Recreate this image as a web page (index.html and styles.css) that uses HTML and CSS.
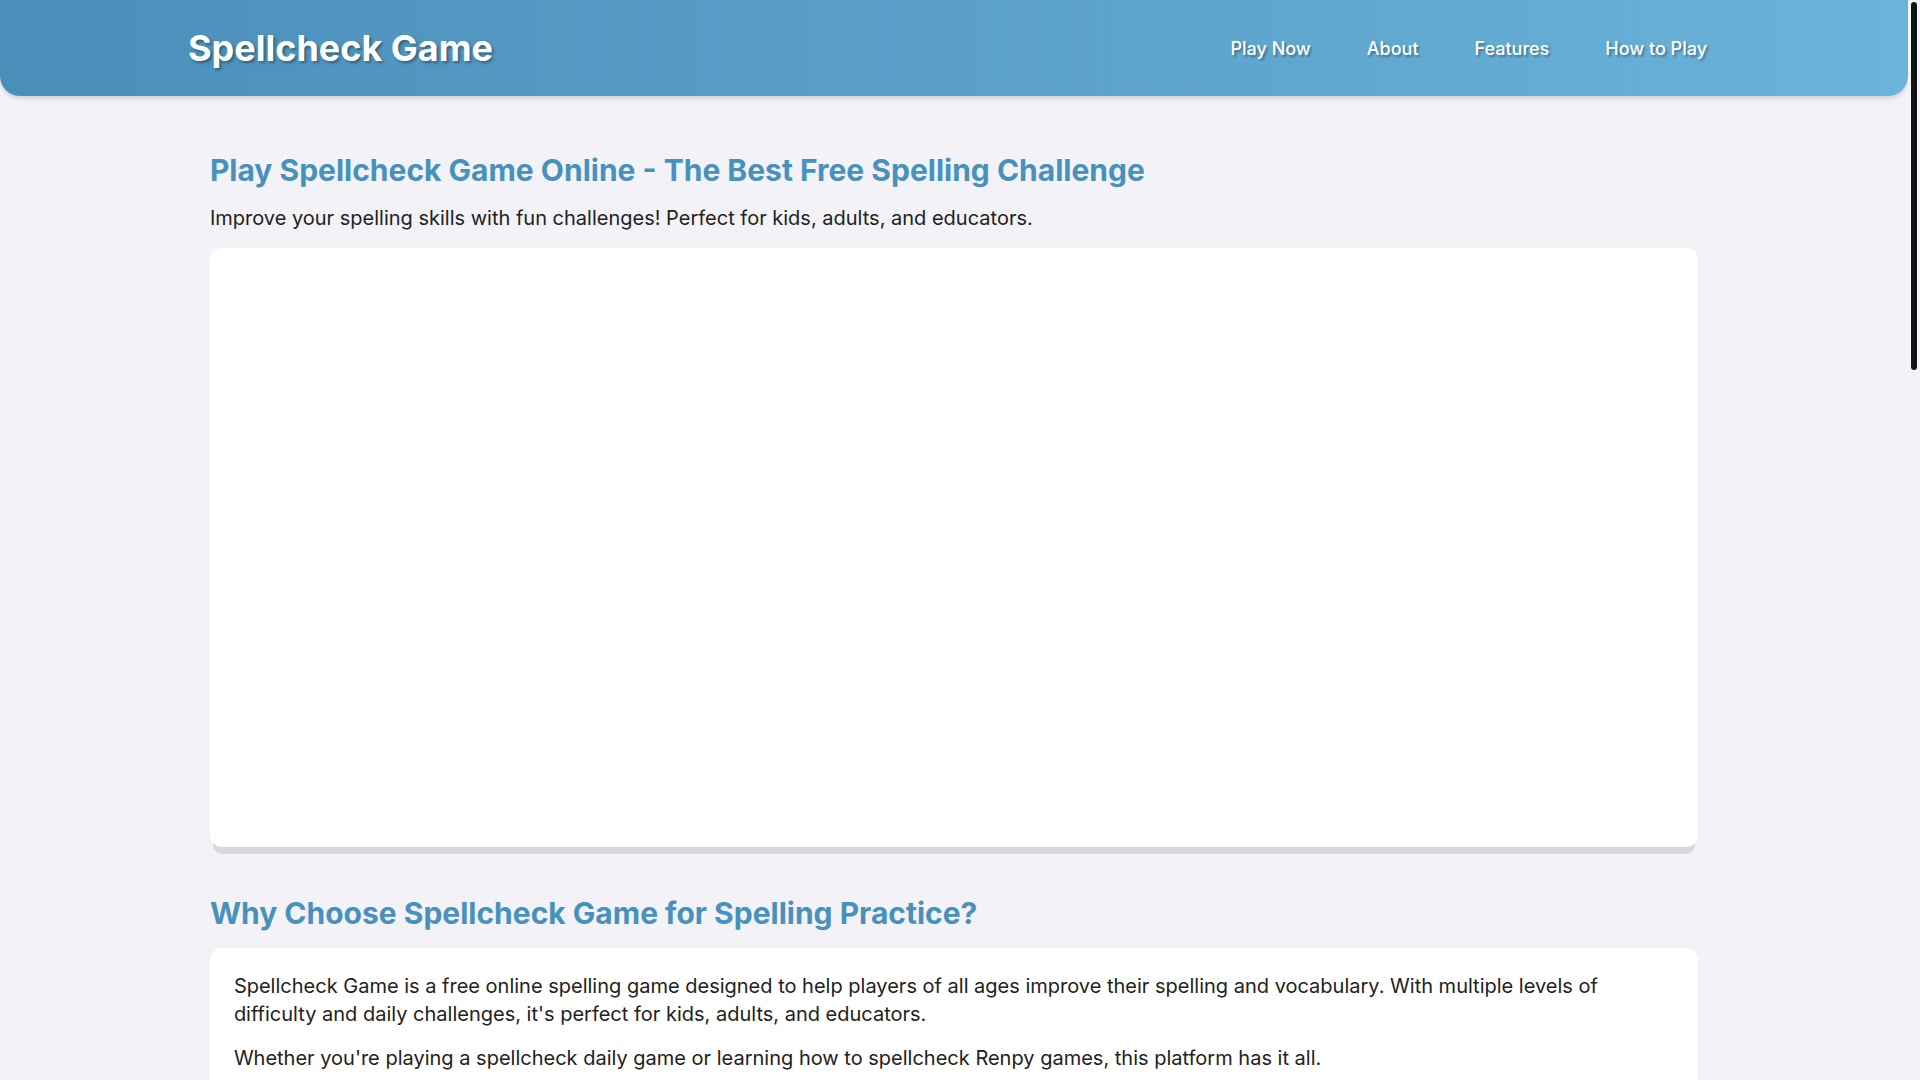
FILE: index.html
```html
<!DOCTYPE html>
<html lang="en">
<head>
<meta charset="utf-8">
<title>Spellcheck Game - Play Free Online Spelling Challenge</title>
<link rel="stylesheet" href="styles.css">
</head>
<body>
<div class="page">
<header class="site-header">
  <div class="header-inner">
    <div class="logo">Spellcheck Game</div>
    <nav class="nav">
      <a href="#play" class="nav-link">Play Now</a>
      <a href="#about" class="nav-link">About</a>
      <a href="#features" class="nav-link">Features</a>
      <a href="#how" class="nav-link">How to Play</a>
    </nav>
  </div>
</header>

<main class="main">
  <section id="play" class="section">
    <h1 class="title">Play Spellcheck Game Online - The Best Free Spelling Challenge</h1>
    <p class="intro">Improve your spelling skills with fun challenges! Perfect for kids, adults, and educators.</p>
    <div class="game-frame"></div>
  </section>

  <section id="about" class="section">
    <h2 class="title">Why Choose Spellcheck Game for Spelling Practice?</h2>
    <div class="card">
      <p>Spellcheck Game is a free online spelling game designed to help players of all ages improve their spelling and vocabulary. With multiple levels of difficulty and daily challenges, it's perfect for kids, adults, and educators.</p>
      <p>Whether you're playing a spellcheck daily game or learning how to spellcheck Renpy games, this platform has it all.</p>
    </div>
  </section>

  <section id="features" class="section">
    <h2 class="title">Features of Spellcheck Game</h2>
    <div class="card">
      <ul class="list">
        <li><strong>Daily Challenges:</strong> A new set of words to spell every single day.</li>
        <li><strong>Multiple Difficulty Levels:</strong> From easy everyday words to tricky advanced vocabulary.</li>
        <li><strong>Instant Feedback:</strong> See right away which words you spelled correctly.</li>
        <li><strong>Free to Play:</strong> No downloads, no sign-ups, play directly in your browser.</li>
        <li><strong>Great for Classrooms:</strong> Teachers can use it as a fun spelling exercise.</li>
      </ul>
    </div>
  </section>

  <section id="how" class="section">
    <h2 class="title">How to Play Spellcheck Game</h2>
    <div class="card">
      <ol class="list">
        <li>Click "Play Now" to start the game.</li>
        <li>Read or listen to the word and type the correct spelling.</li>
        <li>Submit your answer and check your result.</li>
        <li>Keep going to beat your best score and unlock harder levels.</li>
      </ol>
    </div>
  </section>

  <section class="section">
    <h2 class="title">Frequently Asked Questions</h2>
    <div class="card">
      <h3 class="q">Is Spellcheck Game free?</h3>
      <p>Yes, Spellcheck Game is completely free to play online.</p>
      <h3 class="q">Who can play Spellcheck Game?</h3>
      <p>Everyone! It is designed for kids, adults, and educators who want to practice spelling.</p>
      <h3 class="q">Do I need to install anything?</h3>
      <p>No installation is required. The game runs in any modern web browser.</p>
      <h3 class="q">Is there a new challenge every day?</h3>
      <p>Yes, a fresh daily challenge is available so you can practice every day.</p>
    </div>
  </section>
</main>

<footer class="footer">
  <p>&copy; 2025 Spellcheck Game. All rights reserved.</p>
</footer>
</div>
<div class="scrollbar" aria-hidden="true"><div class="scroll-thumb"></div></div>
</body>
</html>
```

FILE: styles.css
```css
html {
  background: #f2f2f7;
}

body {
  margin: 0;
  background: #f2f2f7;
  font-family: Inter, "Noto Sans", sans-serif;
  color: #222;
}

.page {
  margin-right: 12px;
}

.scrollbar {
  position: fixed;
  top: 0;
  right: 0;
  width: 12px;
  height: 100%;
  background: #f2f2f7;
}

.scroll-thumb {
  margin: 2px 0 0 3px;
  width: 6px;
  height: 368px;
  background: #111;
  border-radius: 3px;
}

.site-header {
  height: 96px;
  background: linear-gradient(90deg, #4a8fba 0%, #5aa0c9 50%, #6ab3d9 100%);
  border-radius: 0 0 20px 20px;
  box-shadow: 0 3px 4px rgba(0, 0, 0, 0.12);
}

.header-inner {
  height: 100%;
  padding: 0 173px 0 188px;
  display: flex;
  align-items: center;
  justify-content: space-between;
}

.logo {
  font-size: 36px;
  font-weight: 700;
  color: #fff;
  text-shadow: 2px 2px 3px rgba(0, 0, 0, 0.35);
}

.nav {
  display: flex;
}

.nav-link {
  padding: 8px 28px;
  color: #fff;
  text-decoration: none;
  font-size: 18px;
  font-weight: 500;
  text-shadow: 2px 2px 2px rgba(0, 0, 0, 0.3);
}

.main {
  width: 78%;
  margin: 0 auto;
  padding: 40px 0;
}

.title {
  font-size: 30px;
  line-height: 36px;
  font-weight: 700;
  color: #4891bd;
  margin: 16px 0 16px;
}

.section + .section .title {
  margin-top: 0;
}

.section h2.title {
  margin-bottom: 17px;
}

.intro {
  font-size: 20px;
  line-height: 28px;
  margin: 0 0 16px;
}

.game-frame {
  height: 599px;
  background: #fff;
  border-radius: 12px;
  box-shadow: 0 10px 0 -3px #d7d7dc;
  margin-bottom: 48px;
}

.card {
  background: #fff;
  border-radius: 12px;
  padding: 24px 24px 8px;
  margin-bottom: 48px;
}

.card p {
  font-size: 20px;
  line-height: 28px;
  margin: 0 0 16px;
}

.list {
  margin: 0 0 16px;
  padding-left: 28px;
  font-size: 20px;
  line-height: 1.6;
}

.q {
  font-size: 22px;
  font-weight: 600;
  color: #333;
  margin: 0 0 8px;
}

.footer {
  text-align: center;
  padding: 30px 0 40px;
  color: #666;
  font-size: 16px;
}
```
